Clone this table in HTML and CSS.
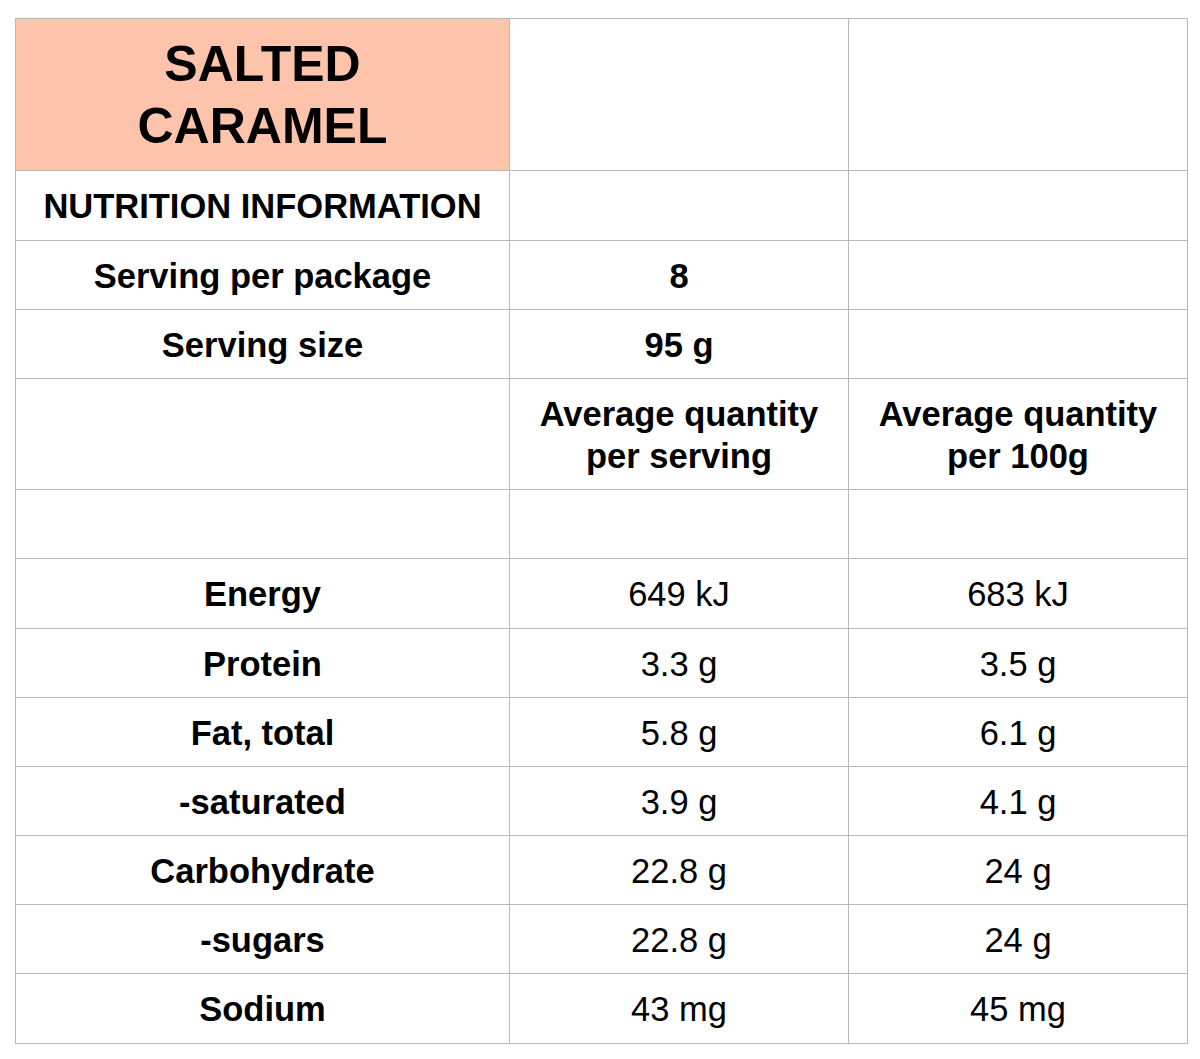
FILE: index.html
```html
<!DOCTYPE html>
<html>
<head>
<meta charset="utf-8">
<link rel="stylesheet" href="styles.css">
</head>
<body>
<div class="table">
  <div class="cell title h152">SALTED<br>CARAMEL</div><div class="cell h152"></div><div class="cell h152"></div>
  <div class="cell b h70">NUTRITION INFORMATION</div><div class="cell h70"></div><div class="cell h70"></div>
  <div class="cell b h69">Serving per package</div><div class="cell b h69">8</div><div class="cell h69"></div>
  <div class="cell b h69">Serving size</div><div class="cell b h69">95 g</div><div class="cell h69"></div>
  <div class="cell h111"></div><div class="cell b h111 two">Average quantity<br>per serving</div><div class="cell b h111 two">Average quantity<br>per 100g</div>
  <div class="cell h69"></div><div class="cell h69"></div><div class="cell h69"></div>
  <div class="cell b h70">Energy</div><div class="cell h70">649 kJ</div><div class="cell h70">683 kJ</div>
  <div class="cell b h69">Protein</div><div class="cell h69">3.3 g</div><div class="cell h69">3.5 g</div>
  <div class="cell b h69">Fat, total</div><div class="cell h69">5.8 g</div><div class="cell h69">6.1 g</div>
  <div class="cell b h69">-saturated</div><div class="cell h69">3.9 g</div><div class="cell h69">4.1 g</div>
  <div class="cell b h69">Carbohydrate</div><div class="cell h69">22.8 g</div><div class="cell h69">24 g</div>
  <div class="cell b h69">-sugars</div><div class="cell h69">22.8 g</div><div class="cell h69">24 g</div>
  <div class="cell b h70">Sodium</div><div class="cell h70">43 mg</div><div class="cell h70">45 mg</div>
</div>
</body>
</html>
```
FILE: styles.css
```css
html, body {
  margin: 0;
  padding: 0;
  background: #ffffff;
}
body {
  font-family: "Liberation Sans", Arial, sans-serif;
  color: #000000;
}
.table {
  display: grid;
  grid-template-columns: 494px 339px 339px;
  width: max-content;
  margin: 18px 0 0 15px;
  border-left: 1px solid #b9b9b9;
  border-top: 1px solid #b9b9b9;
}
.cell {
  box-sizing: border-box;
  border-right: 1px solid #b9b9b9;
  border-bottom: 1px solid #b9b9b9;
  display: flex;
  align-items: center;
  justify-content: center;
  text-align: center;
  font-size: 34.5px;
  line-height: 40px;
  padding-top: 1px;
}
.b { font-weight: bold; }
.two { line-height: 42px; }
.title {
  background: #fdc4ab;
  font-weight: bold;
  font-size: 50px;
  line-height: 62px;
}
.h152 { height: 152px; }
.h111 { height: 111px; }
.h70 { height: 70px; }
.h69 { height: 69px; }
```
